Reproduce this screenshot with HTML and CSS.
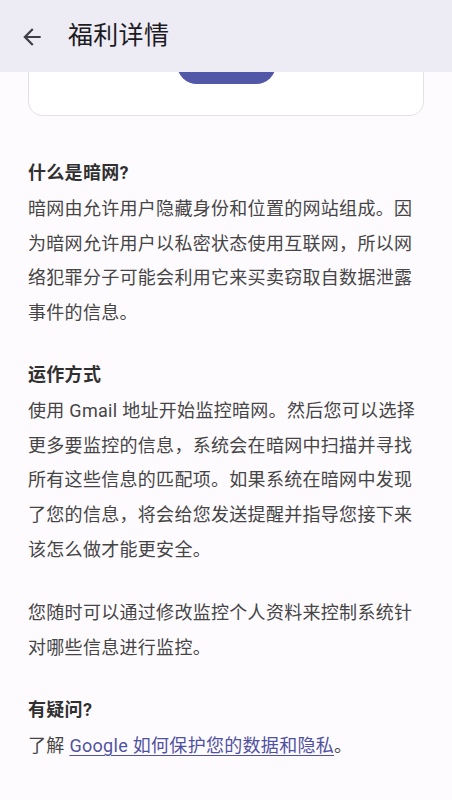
FILE: index.html
```html
<!DOCTYPE html>
<html lang="zh-CN">
<head>
<meta charset="utf-8">
<title>福利详情</title>
<link rel="stylesheet" href="styles.css">
</head>
<body>
<header class="app-bar">
  <button class="back" aria-label="返回">
    <svg viewBox="0 0 24 24" width="26" height="26"><path d="M20 11H7.83l5.59-5.59L12 4l-8 8 8 8 1.41-1.41L7.83 13H20v-2z" fill="currentColor"/></svg>
  </button>
  <h1 class="title">福利详情</h1>
</header>
<main class="content">
  <div class="card">
    <span class="card-btn"></span>
  </div>
  <section class="block">
    <h2 class="block-title">什么是暗网?</h2>
    <p class="text">暗网由允许用户隐藏身份和位置的网站组成。因为暗网允许用户以私密状态使用互联网，所以网络犯罪分子可能会利用它来买卖窃取自数据泄露事件的信息。</p>
  </section>
  <section class="block">
    <h2 class="block-title">运作方式</h2>
    <p class="text">使用 Gmail 地址开始监控暗网。然后您可以选择更多要监控的信息，系统会在暗网中扫描并寻找所有这些信息的匹配项。如果系统在暗网中发现了您的信息，将会给您发送提醒并指导您接下来该怎么做才能更安全。</p>
  </section>
  <section class="block">
    <p class="text">您随时可以通过修改监控个人资料来控制系统针对哪些信息进行监控。</p>
  </section>
  <section class="block">
    <h2 class="block-title">有疑问?</h2>
    <p class="text">了解 <a class="link" href="#">Google 如何保护您的数据和隐私</a>。</p>
  </section>
</main>
</body>
</html>
```
FILE: styles.css
```css
* { box-sizing: border-box; }
html, body {
  margin: 0;
  padding: 0;
  background: #fefbff;
  font-family: Roboto, "Noto Sans CJK SC", sans-serif;
}
body {
  width: 452px;
  height: 800px;
  overflow: hidden;
}
.app-bar {
  position: fixed;
  top: 0;
  left: 0;
  right: 0;
  height: 72px;
  background: #edebf4;
  display: flex;
  align-items: center;
  padding-left: 19px;
  gap: 23px;
  z-index: 2;
}
.back {
  border: 0;
  background: none;
  padding: 0;
  width: 26px;
  height: 26px;
  color: #3f3d45;
  display: flex;
  margin-top: 1px;
}
.title {
  margin: 0;
  font-size: 25px;
  font-weight: 400;
  color: #1c1b1f;
  line-height: 32px;
  letter-spacing: 0.3px;
}
.content {
  padding: 20px 28px 0;
}
.card {
  height: 96px;
  border: 1px solid #e3e1e8;
  border-radius: 14px;
  background: #fff;
  display: flex;
  justify-content: center;
  align-items: flex-end;
  padding-bottom: 31px;
  margin-bottom: 42px;
}
.card-btn {
  display: block;
  width: 99px;
  height: 40px;
  border-radius: 20px;
  background: #5357a8;
}
.block {
  margin-bottom: 29px;
}
.block-title {
  margin: 0 0 4px;
  font-size: 18px;
  font-weight: 700;
  line-height: 30px;
  color: #303030;
  letter-spacing: 0.3px;
}
.text {
  margin: 0;
  font-size: 18px;
  line-height: 34.7px;
  color: #454545;
  letter-spacing: 0.3px;
}
.link {
  color: #4f52a0;
  text-decoration: underline;
  text-underline-offset: 3px;
  text-decoration-thickness: 1px;
}
```
